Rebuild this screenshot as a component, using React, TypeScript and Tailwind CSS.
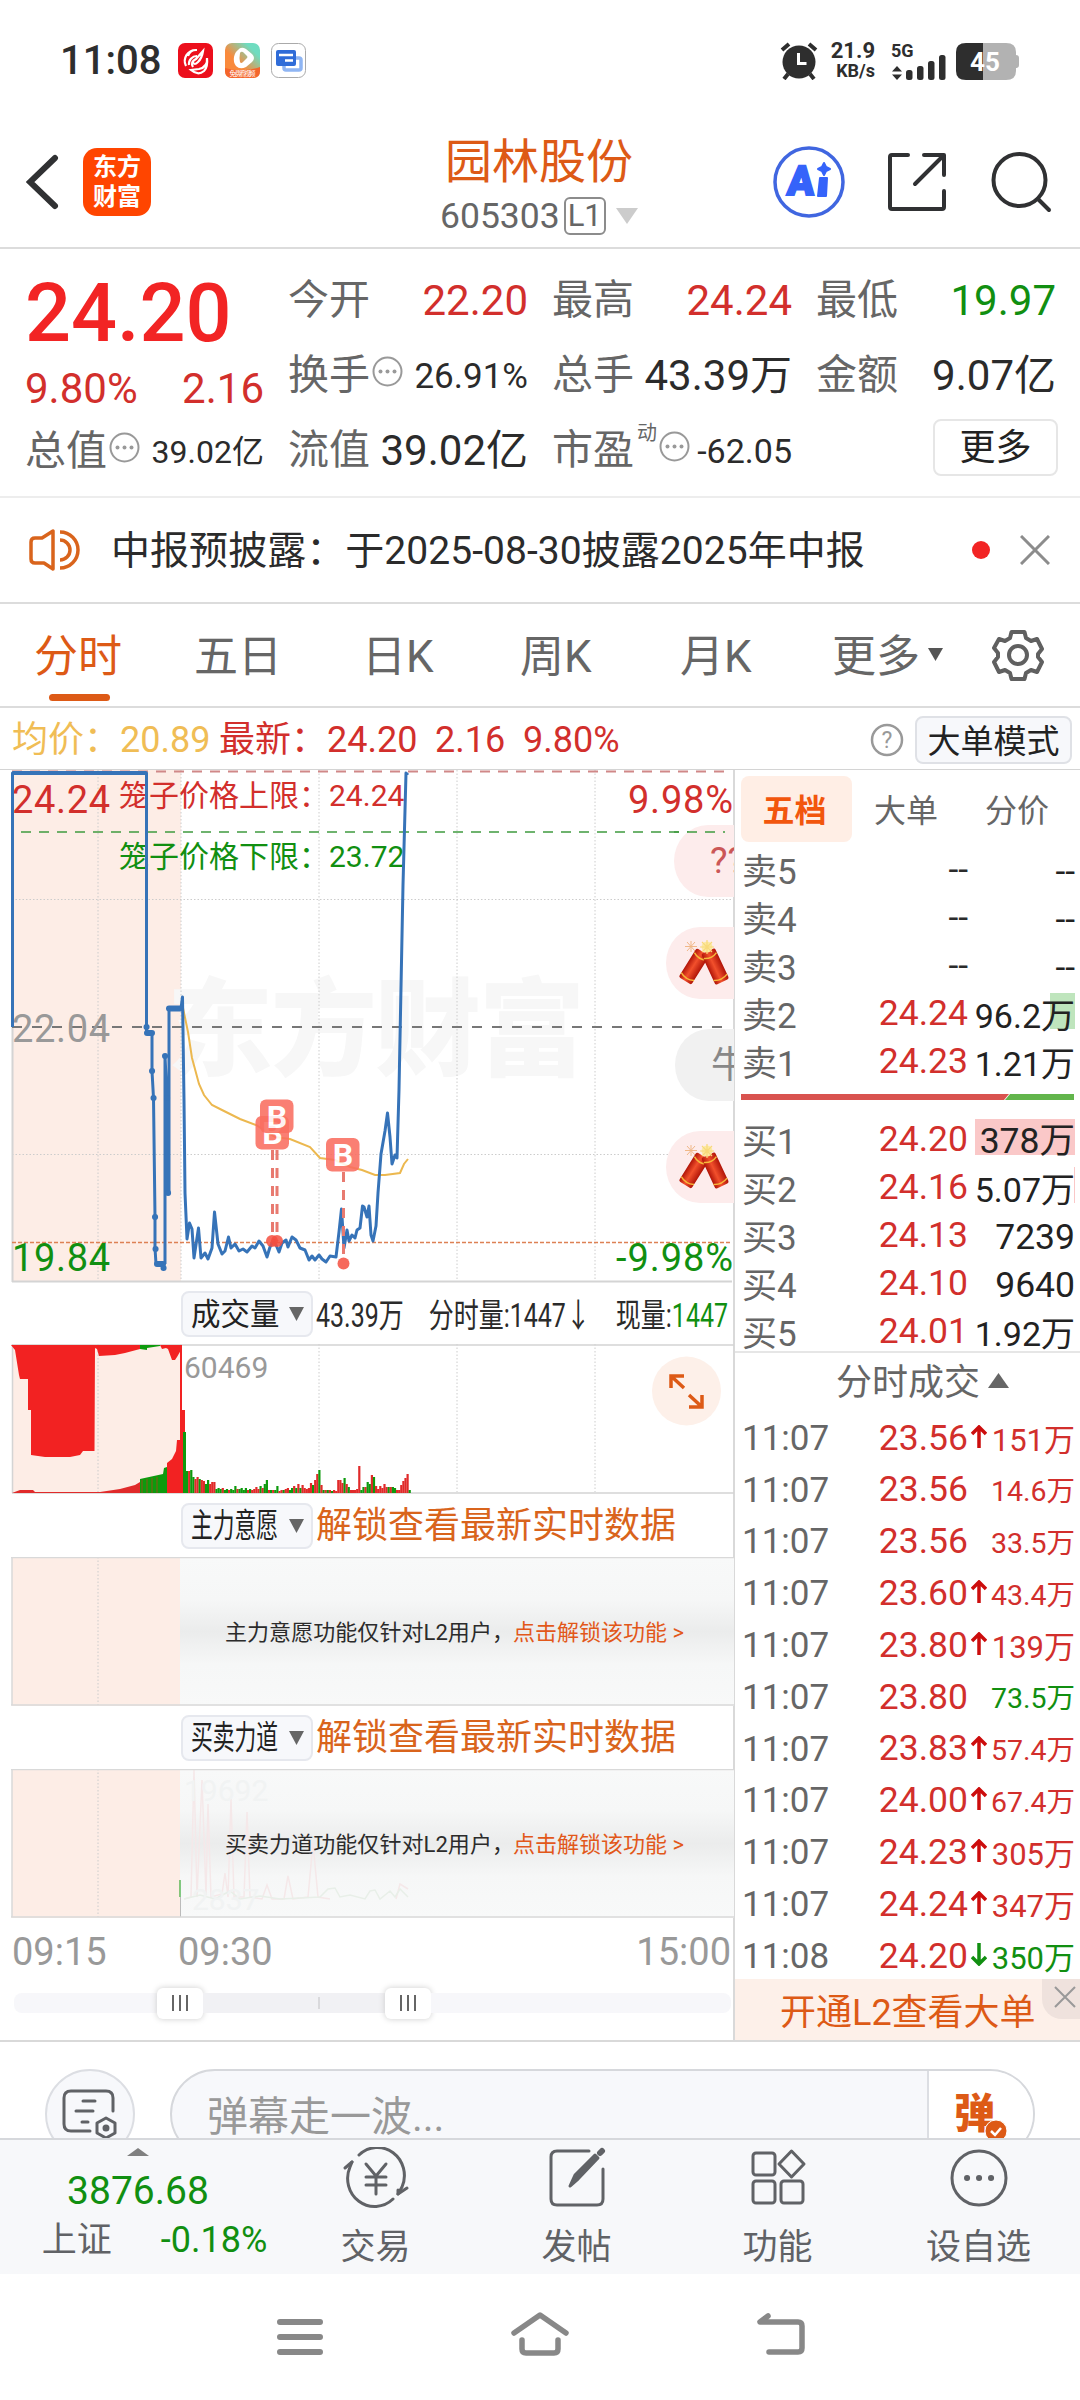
import { clsx } from "clsx";
import type { ReactNode } from "react";

const RED = "#d22f2c";
const GREEN = "#118f11";

interface Quote {
    label: string;
    price: string;
    volume: string;
    mark?: string;
}

interface Trade {
    time: string;
    price: string;
    volume: string;
    arrow?: "up" | "down";
    sell?: boolean;
}

const asks: Quote[] = [
    { label: "卖5", price: "--", volume: "--" },
    { label: "卖4", price: "--", volume: "--" },
    { label: "卖3", price: "--", volume: "--" },
    { label: "卖2", price: "24.24", volume: "96.2万", mark: "w-[25px] bg-[#bfe5bd]" },
    { label: "卖1", price: "24.23", volume: "1.21万" }
];

const bids: Quote[] = [
    { label: "买1", price: "24.20", volume: "378万", mark: "w-[100px] bg-[#fac8c8]" },
    { label: "买2", price: "24.16", volume: "5.07万", mark: "w-px bg-[#fac8c8]" },
    { label: "买3", price: "24.13", volume: "7239" },
    { label: "买4", price: "24.10", volume: "9640" },
    { label: "买5", price: "24.01", volume: "1.92万" }
];

const trades: Trade[] = [
    { time: "11:07", price: "23.56", volume: "151万", arrow: "up" },
    { time: "11:07", price: "23.56", volume: "14.6万" },
    { time: "11:07", price: "23.56", volume: "33.5万" },
    { time: "11:07", price: "23.60", volume: "43.4万", arrow: "up" },
    { time: "11:07", price: "23.80", volume: "139万", arrow: "up" },
    { time: "11:07", price: "23.80", volume: "73.5万", sell: true },
    { time: "11:07", price: "23.83", volume: "57.4万", arrow: "up" },
    { time: "11:07", price: "24.00", volume: "67.4万", arrow: "up" },
    { time: "11:07", price: "24.23", volume: "305万", arrow: "up" },
    { time: "11:07", price: "24.24", volume: "347万", arrow: "up" },
    { time: "11:08", price: "24.20", volume: "350万", arrow: "down", sell: true }
];

// one entry per minute after the open, g = falling, r = rising
const volumeBars =
    "g22 r22 g23 g16 r14 r16 g14 r13 r12 g9 g13 r9 r11 r11 g4 g5 g4 r5 g3 g4 r3 g4 g3 g7 r4 g4 g5 g3 g5 r3 g4 r3 r4 r6 r4 g7 r5 g9 g13 r3 g3 r3 g3 g7 r2 r3 g3 r4 r5 g3 g5 r7 g5 r9 g5 r8 r5 r4 r5 r10 g8 r13 r19 g23 r8 g3 r3 g3 r3 g2 r3 r2 r13 r13 r10 g15 r9 g6 r3 r3 r3 r4 r27 g3 g6 r6 g11 g9 r18 g16 r7 r4 r7 r5 r9 r6 g6 r6 g6 g5 r3 r3 r8 r12 r15 r19 g3"
        .split(" ")
        .map(item => ({
            color: item[0] === "g" ? "#0d9a0d" : "#e02a2a",
            height: Number(item.slice(1))
        }));

function StatusBar() {
    return (
        <div className="flex h-[122px] items-center pl-[60px] pr-[61px] text-[#2e2e2e]">
            <div className="w-[118px] text-[40px] font-medium leading-none">11:08</div>
            <svg width="130" height="36" viewBox="0 0 130 36">
                <defs>
                    <linearGradient id="video" x1="0" y1="1" x2="1" y2="0">
                        <stop offset="0.4" stopColor="#f98a3c" />
                        <stop offset="0.8" stopColor="#6fdcc0" />
                    </linearGradient>
                </defs>
                <rect width="35" height="35" rx="7" fill="#ec0f1c" />
                <path d="M18 7a11 11 0 0 0-10 16M10 13a9 9 0 0 1 9-6M11 22a8 8 0 0 1 8-9M15 24q-3-5 3-8l7-8q-1 7-5 11-4 4-5 0M29 15q1 9-8 11l-8 1q7 6 13 1 4-4 3-13" fill="none" stroke="#fff" strokeWidth="2.2" />
                <rect x="47" width="35" height="35" rx="7" fill="url(#video)" />
                <path d="M47 25q17 5 35-1v4q0 7-7 7h-21q-7 0-7-7z" fill="#f4652b" />
                <path d="M60 7q3-4 8-1l6 5q4 4 0 8l-6 5q-6 3-10-1-3-4-2-9 1-5 4-7zM62 10q-1 5 0 9 1 2 3 0l4-4q1-1 0-2l-4-4q-2-1-3 1" fill="#fff" fillRule="evenodd" />
                <text x="51.500" y="32.500" fontSize="6.500" fill="#fff" textLength="26">免费看视频</text>
                <rect x="93.500" y="0.500" width="34" height="34" rx="7" fill="#fff" stroke="#aaa" />
                <rect x="106" y="15" width="17" height="12" rx="2" fill="none" stroke="#8fb5f3" strokeWidth="3.500" />
                <rect x="98" y="7" width="20" height="16" rx="2" fill="#2f6cd8" />
                <path d="M101 12h14M107 17.500h8" stroke="#fff" strokeWidth="2.500" />
            </svg>
            <div className="ml-auto flex items-center">
                <svg width="38" height="38" viewBox="0 0 38 38" fill="none" stroke="#2e2e2e">
                    <circle cx="19" cy="20" r="16.500" fill="#2e2e2e" stroke="none" />
                    <path d="M2 8l7-6M36 8l-7-6" strokeWidth="4" />
                    <path d="M8 32l-4 5M30 32l4 5" strokeWidth="4" />
                    <path d="M18.500 11v10.500h8" stroke="#fff" strokeWidth="3" />
                </svg>
                <div className="ml-3.5 flex w-[43px] flex-col items-end text-[20px] font-bold leading-[20px]">
                    <span className="text-[22px]">21.9</span>
                    <span className="text-[18px]">KB/s</span>
                </div>
                <svg width="56" height="38" viewBox="0 0 56 38" className="ml-4" fill="#2e2e2e">
                    <text x="0" y="15" fontSize="18" fontWeight="700">5G</text>
                    <path d="M6 24l5 5.500H1zM6 38l5-5.500H1z" />
                    <rect x="15" y="28" width="6.500" height="10" rx="2.500" />
                    <rect x="26" y="24" width="6.500" height="14" rx="2.500" />
                    <rect x="37" y="19" width="6.500" height="19" rx="2.500" />
                    <rect x="48" y="13" width="6.500" height="25" rx="2.500" />
                </svg>
                <svg width="63" height="37" viewBox="0 0 63 37" className="ml-[9px]">
                    <path d="M26 0h24q10 0 10 9v3q3 0 3 3v7q0 3-3 3v3q0 9-10 9H26z" fill="#b2b2b2" />
                    <path d="M27 0H10Q0 0 0 9v19q0 9 10 9h17z" fill="#2e2e2e" />
                    <text x="29" y="28" fontSize="26" fontWeight="700" fill="#fff" textAnchor="middle">45</text>
                </svg>
            </div>
        </div>
    );
}

function Header() {
    return (
        <div className="flex h-[127px] items-center border-b-2 border-[#dcdcdc] pb-1.5 pl-[26px] pr-[28px]">
            <svg width="34" height="60" viewBox="0 0 34 60" fill="none" stroke="#303133" strokeWidth="6" strokeLinecap="round">
                <path d="M29 6L4 30l25 24" />
            </svg>
            <div className="ml-[23px] flex h-[68px] w-[68px] flex-col items-center justify-center rounded-[14px] bg-[#ff4500] text-[24px] font-bold leading-[30px] text-white">
                <span>东方</span>
                <span>财富</span>
            </div>
            <div className="ml-[289px] flex w-[201px] flex-col pt-4">
                <div className="pl-[5px] text-[47px] leading-[52px] text-[#dd5a16]">园林股份</div>
                <div className="flex items-center text-[35.5px] leading-[56px] text-[#666]">
                    605303
                    <span className="ml-1 flex h-[38px] w-[42px] items-center justify-center rounded-md border-2 border-[#8c8c8c] text-[31px] leading-none">L1</span>
                    <svg width="22" height="16" viewBox="0 0 22 16" className="ml-2.5">
                        <path d="M0 0h22L11 16z" fill="#ccc" />
                    </svg>
                </div>
            </div>
            <svg width="74" height="74" viewBox="0 0 74 74" className="ml-auto" fill="#3563fa">
                <circle cx="37" cy="37" r="34" fill="none" stroke="#4066e0" strokeWidth="3.500" />
                <text x="15" y="50" fontSize="41" fontWeight="900" textLength="27" lengthAdjust="spacingAndGlyphs" stroke="#3563fa" strokeWidth="2" transform="skewX(-4) translate(3 0)">A</text>
                <path d="M48 33h7l-1 18h-8zM52 18l2 4 4 2-4 2-2 4-2-4-4-2 4-2z" strokeWidth="2" stroke="#3563fa" strokeLinejoin="round" />
            </svg>
            <svg width="60" height="60" viewBox="0 0 60 60" className="ml-[41px]" fill="none" stroke="#303133" strokeWidth="4" strokeLinecap="round" strokeLinejoin="round">
                <path d="M21 3H5q-2 0-2 2v50q0 2 2 2h50q2 0 2-2V39M37 3h20v20M56 4L28 32" />
            </svg>
            <svg width="62" height="62" viewBox="0 0 62 62" className="ml-[43px]" fill="none" stroke="#303133" strokeWidth="4" strokeLinecap="round">
                <circle cx="29.500" cy="29" r="26" />
                <path d="M48 48l11 11" />
            </svg>
        </div>
    );
}

function Dots() {
    return (
        <svg width="31" height="31" viewBox="0 0 31 31" className="mb-2 ml-0.5 shrink-0" fill="#999">
            <circle cx="15.500" cy="15.500" r="14" fill="none" stroke="#999" strokeWidth="2" />
            <circle cx="8.500" cy="15.500" r="2" />
            <circle cx="15.500" cy="15.500" r="2" />
            <circle cx="22.500" cy="15.500" r="2" />
        </svg>
    );
}

interface StatProps {
    label: string;
    value: string;
    className?: string;
    extra?: ReactNode;
}

function Stat({ label, value, className = "text-[42px] text-[#2b2b2b]", extra }: StatProps) {
    return (
        <div className="flex h-[75px] items-center whitespace-nowrap">
            <span className="text-[41px] text-[#666]">{label}</span>
            {extra}
            <span className={clsx("ml-auto", className)}>{value}</span>
        </div>
    );
}

function Stats() {
    return (
        <div className="flex h-[249px] gap-6 border-b-2 border-[#ededed] pl-[25px] pr-6 pt-3.5 leading-none">
            <div className="w-[239px]">
                <div className="flex h-[101px] items-center text-[81px] font-medium text-[#f22424]">24.20</div>
                <div className="flex h-[50px] items-center justify-between text-[42px] text-[#d22f2c]">
                    <span>9.80%</span>
                    <span>2.16</span>
                </div>
                <Stat label="总值" value="39.02亿" extra={<Dots />} className="text-[32px] text-[#2b2b2b]" />
            </div>
            <div className="w-[240px]">
                <Stat label="今开" value="22.20" className="text-[42px] text-[#d22f2c]" />
                <Stat label="换手" value="26.91%" extra={<Dots />} className="pt-0.5 text-[35px] text-[#2b2b2b]" />
                <Stat label="流值" value="39.02亿" />
            </div>
            <div className="w-[240px]">
                <Stat label="最高" value="24.24" className="text-[42px] text-[#d22f2c]" />
                <Stat label="总手" value="43.39万" />
                <Stat
                    label="市盈"
                    value="-62.05"
                    className="text-[34px] text-[#2b2b2b]"
                    extra={
                        <>
                            <span className="mb-9 ml-[3px] text-[20px] text-[#666]">动</span>
                            <Dots />
                        </>
                    }
                />
            </div>
            <div className="w-[240px]">
                <Stat label="最低" value="19.97" className="text-[42px] text-[#118f11]" />
                <Stat label="金额" value="9.07亿" />
                <div className="ml-auto mr-[-2px] mt-1.5 flex h-[57px] w-[125px] items-center justify-center rounded-lg border-2 border-[#e6e6e6] text-[36px] text-[#222]">更多</div>
            </div>
        </div>
    );
}

function Notice() {
    return (
        <div className="flex h-[106px] items-center border-b-2 border-[#dcdcdc] pl-[29px] pr-[30px]">
            <svg width="52" height="44" viewBox="0 0 52 44" fill="none" stroke="#d9641c" strokeWidth="3.500" strokeLinejoin="round">
                <path d="M24 3v38L15 35H6q-4 0-4-4V14q0-4 4-4h7z" />
                <path d="M31 4a18 18 0 0 1 0 36M31 12a10 10 0 0 1 0 20" />
            </svg>
            <span className="ml-[30px] pt-0.5 text-[39px] leading-none tracking-[0.05px] text-[#2b2b2b]">中报预披露：于2025-08-30披露2025年中报</span>
            <span className="ml-auto h-[18px] w-[18px] rounded-full bg-[#f22424]" />
            <svg width="30" height="30" viewBox="0 0 30 30" className="ml-[30px]" stroke="#8c8c8c" strokeWidth="3">
                <path d="M1 1l28 28M29 1L1 29" />
            </svg>
        </div>
    );
}

function PeriodTabs() {
    return (
        <div className="flex h-[104px] items-center border-b-2 border-[#dcdcdc] pl-[34px] text-[44px] leading-none text-[#666]">
            <div className="relative w-[160px] pt-[3px] text-[#dd5a16]">
                分时
                <span className="absolute left-[15px] top-[62px] h-[7px] w-[61px] rounded-full bg-[#dd5a16]" />
            </div>
            <div className="w-[168px] pt-[3px]">五日</div>
            <div className="w-[158px] pt-[3px]">日K</div>
            <div className="w-[160px] pt-[3px]">周K</div>
            <div className="w-[152px] pt-[3px]">月K</div>
            <div className="flex items-center pt-[3px]">
                更多
                <svg width="15" height="13" viewBox="0 0 15 13" className="mb-1 ml-2" fill="#555">
                    <path d="M0 0h15L7.500 13z" />
                </svg>
            </div>
            <svg width="52" height="52" viewBox="0 0 52 52" className="ml-[49px]" fill="none" stroke="#606060" strokeWidth="4" strokeLinejoin="round">
                <path d="M19.500 3h13l1.500 6 5 3 6-2 5 10-4 5v3l4 5-5 10-6-2-5 3-1.500 6h-13L18 44l-5-3-6 2-5-10 4-5v-4l-4-5L7 10l6 2 5-3z" />
                <circle cx="26" cy="26" r="9" />
            </svg>
        </div>
    );
}

function PriceLine() {
    return (
        <div className="flex h-[62px] items-center border-b border-[#d4d4d4] pl-3 pr-2 pt-0.5 text-[36px] leading-none text-[#d22f2c]">
            <span className="w-[207px] text-[#f0bd55]">均价：20.89</span>
            <span className="w-[216px]">最新：24.20</span>
            <span className="w-[88px]">2.16</span>
            <span>9.80%</span>
            <svg width="34" height="34" viewBox="0 0 34 34" className="ml-auto">
                <circle cx="17" cy="17" r="15" fill="none" stroke="#999" strokeWidth="2.500" />
                <text x="17" y="25" fontSize="23" fill="#999" textAnchor="middle">?</text>
            </svg>
            <span className="ml-[11px] flex h-12 w-[157px] items-center justify-center rounded-lg border-2 border-[#dfe1e6] bg-[#f7f8fb] pt-[3px] text-[33px] text-[#222]">大单模式</span>
        </div>
    );
}

function Firecracker({ x, y }: { x: number; y: number }) {
    const tube = (
        <>
            <rect x="-7.500" y="0" width="15" height="34" rx="2" fill="url(#tube)" />
            <path d="M-7 5q7 4 14 0M-7.500 29q7.500 4 15 0" stroke="#f6b93b" strokeWidth="1.500" fill="none" />
        </>
    );
    return (
        <g transform={`translate(${x} ${y})`}>
            <g transform="translate(21 11) rotate(32)">{tube}</g>
            <g transform="translate(26 10) rotate(-25)">{tube}</g>
            <circle cx="25" cy="6" r="5.500" fill="#fce9a0" />
            <path d="M25-1v14M18 6h14M20 1l10 10M30 1L20 11" stroke="#f8d97a" strokeWidth="1.200" />
            <path d="M9 0v11M3 5.500h12M5 1l8 9M13 1l-8 9" stroke="#f0b888" strokeWidth="1" />
        </g>
    );
}

function BuyMark({ x, y }: { x: number; y: number }) {
    return (
        <g opacity="0.88">
            <rect x={x} y={y} width="33.500" height="33.500" rx="6" fill="#fa6e60" />
            <text x={x + 17} y={y + 28} fontSize="32" fontWeight="700" fill="#fff" textAnchor="middle">B</text>
        </g>
    );
}

function PriceChart() {
    return (
        <svg width="734" height="514" viewBox="0 0 734 514" className="block">
            <defs>
                <linearGradient id="tube">
                    <stop offset="0" stopColor="#b01408" />
                    <stop offset="0.45" stopColor="#f2502c" />
                    <stop offset="1" stopColor="#b01408" />
                </linearGradient>
            </defs>
            <rect x="12" y="0" width="169" height="512" fill="#fdede6" />
            <text x="167" y="297" fontSize="106" fontWeight="900" fill="#f7f7f7" textLength="418">东方财富</text>
            <g stroke="#ccc" strokeDasharray="1.500 2">
                <path d="M98 0v512M181 0v512M319 0v512M457 0v512M595 0v512M12 129.500h720M12 384.500h720" />
            </g>
            <path d="M12.500 250v262M12 511.500h720" stroke="#d4d4d4" strokeWidth="2" fill="none" />
            <path d="M12 257h720" stroke="#777" strokeWidth="2" strokeDasharray="10 10" />
            <path d="M12 1.500h712" stroke="#d08888" strokeWidth="2" strokeDasharray="10 8" />
            <path d="M21 62h704" stroke="#3f9a3f" strokeWidth="1.500" strokeDasharray="10 8" />
            <path d="M12 472.500h720" stroke="#dd8154" strokeWidth="1.500" strokeDasharray="4 2" />

            <g fontSize="38">
                <text x="12" y="43" fill={RED} textLength="98">24.24</text>
                <text x="12" y="272" fill="#999" textLength="98">22.04</text>
                <text x="12" y="501" fill={GREEN} textLength="98">19.84</text>
                <text x="628" y="43" fill={RED} textLength="105">9.98%</text>
                <text x="616" y="501" fill={GREEN} textLength="117">-9.98%</text>
            </g>
            <g fontSize="30">
                <text x="119" y="36" fill={RED}>笼子价格上限：24.24</text>
                <text x="119" y="97" fill={GREEN}>笼子价格下限：23.72</text>
            </g>

            <path
                d="M183 238L188 262 192 288 199 314 204 325 212 335 222 340 240 349 256 355 275 367 290 369 310 377 320 388 335 390 350 397 362 400 375 405 385 405 400 403 404 394 408 389"
                fill="none"
                stroke="#ecb84f"
                strokeWidth="2"
            />
            <path
                d="M12.500 257V3H146.500V263H152V301L153.500 328 155 447V478L156 494H163.500V498 M165 494V286L167 328 168 423V423 M169 423V238.500H181L182.500 227 184 330 185 423 187 469 189.500 453 192 459 194 488 198.500 458 201 488 205 483 208 489 212 478 214.500 442 218 474 222 484 225 481 228.500 467 231 478 235 474 239 481 243 479 247 482 252 476 255 478 259 471 263 476 267 487 270 477 274 470 279 482 282 473 286 470 288 477 292 467 296 470 300 478 305 480 309 490 312 486 315 490 319 485 322 489 326 492 330 486 336 487 339 462 341.500 439 344 478 347 460 349 471 352 465 355 468 357 460 360 458 362.500 436 364 437 367 447 369 436 371 465 373 471 376 456 378 423 381 384 385 361 387.500 343 390 367 392 394 395 385 397 388 399 320 403 115 406 3 408 5"
                fill="none"
                stroke="#3673b8"
                strokeWidth="3"
                strokeLinejoin="round"
            />
            <g fill="none" stroke="#3673b8" strokeWidth="6" strokeLinecap="round">
                <path d="M147 263h5M157 494h6M169 238.500h11" />
                <path d="M146.500 257h.1M152 301h.1M153.500 328h.1M155 447h.1M155.500 479h.1M163.500 498h.1M165 286h.1M167 328h.1M168 423h.1" />
            </g>
            <path d="M12.500 3H146.500" stroke="#3673b8" strokeWidth="4" />

            <g stroke="#e87a70" strokeWidth="3" strokeDasharray="10 8">
                <path d="M272.500 380v91M277 380v91M343.500 402v90" />
            </g>
            <g fill="#f44f3f" fillOpacity="0.85">
                <circle cx="272" cy="471" r="6" />
                <circle cx="277" cy="471" r="6" />
                <circle cx="343.500" cy="493.500" r="6" />
            </g>
            <BuyMark x={255.5} y={346} />
            <BuyMark x={260} y={329.5} />
            <BuyMark x={326} y={368} />

            <g fill="#fdecec">
                <path d="M734 55h-26a34 36 0 0 0 0 72h26zM734 157h-34a34 36 0 0 0 0 72h34zM734 361h-34a34 36 0 0 0 0 72h34z" />
            </g>
            <path d="M734 259h-25a34 36 0 0 0 0 72h25z" fill="#f1f1f1" />
            <path d="M674 62h51" stroke="#3f9a3f" strokeWidth="1.500" strokeDasharray="10 8" strokeDashoffset="5" />
            <text x="710" y="103" fontSize="37" fill="#cb5757">??</text>
            <text x="711" y="308" fontSize="37" fill="#888">牛</text>
            <Firecracker x={682} y={171} />
            <Firecracker x={682} y={375} />
        </svg>
    );
}

function IndicatorSelect({ label, className }: { label: string; className: string }) {
    return (
        <div className="flex h-[46px] w-[132px] items-center rounded-lg border-2 border-[#e6e8ee] bg-[#f7f8fb] pl-2 text-[#222]">
            <div className="w-[90px] overflow-visible whitespace-nowrap">
                <span className={clsx("inline-block origin-left", className)}>{label}</span>
            </div>
            <svg width="15" height="14" viewBox="0 0 15 14" className="ml-2" fill="#666">
                <path d="M0 0h15L7.500 14z" />
            </svg>
        </div>
    );
}

function VolumeChart() {
    return (
        <svg width="734" height="150" viewBox="0 0 734 150" className="block">
            <rect x="12" y="0" width="169" height="148" fill="#fdede6" />
            <path d="M98 0v148M181 0v148M319 0v148M457 0v148M595 0v148" stroke="#ccc" strokeDasharray="1.500 2" />
            <path d="M12 1h722M12.500 0v149M12 149h722" stroke="#d4d4d4" strokeWidth="1.500" />
            <g transform="translate(0 1)">
                <path d="M11 0L15 5 19 30 20 34H28V65H31V110L45 112H70L80 110 83 106H94.500L95 3 97 4 99 11 115 10 125 8 140 4V0z" fill="#f22222" />
                <path d="M140 0v4l7 1V3l13-2V0z" fill="#0d9a0d" />
                <path d="M160 0l2 4 4-1 2 1 4 11 3 0 2-3 4-7V0z" fill="#f22222" />
                <path d="M12 148l8-3h13l2 2h65l20-3 15-4 5-3v11z" fill="#e02a2a" />
                <path d="M140 148v-14l23-5 1-6 3-1v26z" fill="#0d9a0d" />
                <path d="M142 148v-13M147 148v-14M152 148v-15M157 148v-16" stroke="#c43b1a" strokeWidth="0.700" />
                <path d="M167 148v-30l5-4 4-8 1-11h3V0h2v65h3v83z" fill="#f22222" />
                <rect x="183" y="87" width="3" height="61" fill="#0d9a0d" />
                {
                    volumeBars.map((bar, index) => (
                        <rect
                            key={index}
                            x={186 + index * 2.1}
                            y={148 - bar.height}
                            width="2.200"
                            height={bar.height}
                            fill={bar.color}
                        />
                    ))
                }
            </g>
            <text x="184" y="34" fontSize="30" fill="#999">60469</text>
            <circle cx="686.500" cy="47" r="34.500" fill="#fdf0e9" />
            <path d="M684 44L671 32M671 44V32h13M689 51l13 12M702 51v12h-13" fill="none" stroke="#dd5a16" strokeWidth="3.500" />
        </svg>
    );
}

function LockedPanel({ name, peaks }: { name: string; peaks?: boolean }) {
    return (
        <>
            <div className="flex h-[63px] items-center pl-[181px]">
                <IndicatorSelect label={name} className="scale-x-[0.66] text-[33px]" />
                <span className="ml-[3px] pt-px text-[36px] text-[#d9641c]">解锁查看最新实时数据</span>
            </div>
            <svg width="734" height="149" viewBox="0 0 734 149" className="block">
                <defs>
                    <linearGradient id="haze" x1="0" y1="0" x2="0" y2="1">
                        <stop offset="0" stopColor="#f8f9f9" />
                        <stop offset="0.28" stopColor="#f6f7f7" />
                        <stop offset="0.5" stopColor="#ebecec" />
                        <stop offset="0.72" stopColor="#f6f7f7" />
                        <stop offset="1" stopColor="#f8f9f9" />
                    </linearGradient>
                </defs>
                <rect x="12" y="0" width="169" height="149" fill="#fdede6" />
                <path d="M98 0v148" stroke="#ccc" strokeDasharray="1.500 2" />
                <rect x="180" y="0" width="554" height="149" fill="url(#haze)" />
                {
                    peaks && (
                        <>
                            <path d="M184 130L191 128 194 1 197 128 202 11 206 126 208 35 211 128 222 125 225 104 228 128 231 30 234 128 244 128 247 43 250 128 262 130 267 116 272 130 284 130 288 107 293 130 308 128 313 74 318 128 330 130M396 130L400 115 408 120" fill="none" stroke="#f5e8e9" strokeWidth="1.500" />
                            <path d="M184 130L200 126 215 130 230 122 240 130 260 127 280 130 320 128 328 120 335 119 340 128 350 126 365 130 370 122 375 121 380 130 390 122 395 128 400 120 408 128" fill="none" stroke="#e8efe8" strokeWidth="1.500" />
                            <text x="184" y="32" fontSize="30" fill="#f1f3f3">19692</text>
                            <text x="192" y="141" fontSize="30" fill="#f1f3f3">2837</text>
                            <path d="M180.500 148v-20" stroke="#bbb" />
                            <path d="M180 128v-17" stroke="#0d9a0d" />
                        </>
                    )
                }
                <path d="M11 .5h723M12 0v148M11 148h723" stroke="#d9d9d9" strokeWidth="1.500" />
                <g fontSize="22">
                    <text x="225" y="83" fill="#2b2b2b" textLength="289">{name}功能仅针对L2用户，</text>
                    <text x="513" y="83" fill="#e2581a" textLength="171">点击解锁该功能 &gt;</text>
                </g>
            </svg>
        </>
    );
}

function SliderHandle() {
    return (
        <div className="flex h-[31px] w-[46px] items-center justify-center gap-[5px] rounded-md bg-white shadow-[0_0_6px_#ccc]">
            <span className="h-4 w-0.5 bg-[#666]" />
            <span className="h-4 w-0.5 bg-[#666]" />
            <span className="h-4 w-0.5 bg-[#666]" />
        </div>
    );
}

function Charts() {
    return (
        <div className="w-[735px] shrink-0 border-r-2 border-[#d9d9d9] leading-none">
            <PriceChart />
            <div className="flex h-[60px] items-center pl-[181px]">
                <IndicatorSelect label="成交量" className="scale-x-[0.95] text-[31px]" />
                <div className="ml-[3px] w-[415px] whitespace-nowrap pt-0.5">
                    <span className="inline-block origin-left scale-x-[0.757] text-[33px] text-[#2b2b2b]">
                        43.39万　分时量:1447↓　现量:<span className="text-[#118f11]">1447</span>
                    </span>
                </div>
            </div>
            <VolumeChart />
            <LockedPanel name="主力意愿" />
            <LockedPanel name="买卖力道" peaks />
            <div className="flex h-[66px] items-center pl-3 pt-0.5 text-[38px] text-[#999]">
                <span className="w-[166px]">09:15</span>
                <span>09:30</span>
                <span className="ml-auto pr-0.5">15:00</span>
            </div>
            <div className="flex h-[38px] items-center pl-3.5">
                <div className="h-5 w-[143px] rounded-l-lg bg-[#f7f7fa]" />
                <SliderHandle />
                <div className="flex h-5 w-[182px] items-center bg-[#f1f1f4]">
                    <span className="ml-[115px] h-3 w-0.5 bg-[#d9d9dc]" />
                </div>
                <SliderHandle />
                <div className="h-5 w-[300px] rounded-r-lg bg-[#f7f7fa]" />
            </div>
        </div>
    );
}

function QuoteRow({ label, price, volume, mark }: Quote) {
    return (
        <div className="flex h-12 shrink-0 items-center pl-[7px] pr-1.5 text-[35px]">
            <span className="w-[130px] pt-1 text-[#666]">{label}</span>
            <span className={clsx("w-[96px] text-right text-[35.5px]", price === "--" ? "text-[#2b2b2b]" : "text-[#d22f2c]")}>{price}</span>
            <span
                className={clsx(
                    "relative ml-auto flex h-9 w-[101px] items-center justify-end text-[#222]",
                    volume.includes(".") ? "text-[34px]" : "text-[35.5px]"
                )}
            >
                {mark && <span className={clsx("absolute right-0 top-[-3px] h-9", mark)} />}
                <span className="relative pt-[3px]">{volume}</span>
            </span>
        </div>
    );
}

function TradeRow({ time, price, volume, arrow, sell }: Trade) {
    return (
        <div className="flex h-[51.8px] shrink-0 items-center whitespace-nowrap pl-[7px] pr-1.5 pt-[3px] text-[35px]">
            <span className="w-[130px] text-[#666]">{time}</span>
            <span className="w-[96px] text-right text-[35.5px] text-[#d22f2c]">{price}</span>
            <span className="flex w-[22px] shrink-0 justify-center">
                {
                    arrow && (
                        <svg width="16" height="23" viewBox="0 0 16 23" className="mb-1" fill="none" stroke={arrow === "up" ? "#cc0d0d" : GREEN} strokeWidth="3.500">
                            <path d={arrow === "up" ? "M8 23V3M1 9l7-7 7 7" : "M8 0v20M1 14l7 7 7-7"} />
                        </svg>
                    )
                }
            </span>
            <span
                className={clsx(
                    "w-[85px] shrink-0 pt-1 text-right",
                    volume.includes(".") ? "text-[28.5px]" : "text-[31px]",
                    sell ? "text-[#118f11]" : "text-[#d22f2c]"
                )}
            >
                {volume}
            </span>
        </div>
    );
}

function OrderBook() {
    return (
        <div className="flex flex-1 flex-col leading-none">
            <div className="flex h-[76px] items-start pl-1.5 pt-1.5 text-[32px] text-[#666]">
                <span className="flex h-[66px] w-[111px] items-center justify-center rounded-lg bg-[#ffeee5] pr-1 pt-1 font-bold text-[#f2560d]">五档</span>
                <span className="flex h-[66px] w-[108px] items-center justify-center pt-1">大单</span>
                <span className="flex h-[66px] w-[114px] items-center justify-center pt-1">分价</span>
            </div>
            <div className="flex h-[248px] flex-col">
                {asks.map(quote => <QuoteRow key={quote.label} {...quote} />)}
            </div>
            <svg width="333" height="6" viewBox="0 0 333 6" className="ml-1.5 shrink-0">
                <path d="M0 0h268l-5 6H0z" fill="#d9534f" />
                <path d="M269 0h64v6h-69z" fill="#62b54c" />
            </svg>
            <div className="flex h-[253px] flex-col border-b-2 border-[#e6e6e6] pt-4">
                {bids.map(quote => <QuoteRow key={quote.label} {...quote} />)}
            </div>
            <div className="flex h-[58px] items-center pl-[101px] pt-0.5 text-[36px] text-[#666]">
                分时成交
                <svg width="21" height="15" viewBox="0 0 21 15" className="mb-1.5 ml-2" fill="#666">
                    <path d="M0 15h21L10.500 0z" />
                </svg>
            </div>
            <div className="flex h-[568px] flex-col">
                {trades.map((trade, index) => <TradeRow key={index} {...trade} />)}
            </div>
            <div className="relative flex h-[61px] items-center bg-[#fdf0e9] pl-[45px] pt-1.5 text-[36px] text-[#dd5a16]">
                开通L2查看大单
                <span className="absolute right-0 top-0 flex h-10 w-[39px] items-center justify-center rounded-bl-[20px] bg-[#efe2dd]">
                    <svg width="22" height="22" viewBox="0 0 22 22" className="mb-1 ml-1.5" stroke="#999" strokeWidth="2">
                        <path d="M1 1l20 20M21 1L1 21" />
                    </svg>
                </span>
            </div>
        </div>
    );
}

function CommentBar() {
    return (
        <div className="flex h-[98px] items-start gap-[35px] overflow-hidden border-t-2 border-[#d9d9d9] pl-[45px] pt-[27px]">
            <div className="flex h-[90px] w-[90px] shrink-0 items-center justify-center rounded-full border-2 border-[#dcdee3] bg-[#f7f8fb]">
                <svg width="56" height="50" viewBox="0 0 56 50" fill="none" stroke="#606266" strokeWidth="3" strokeLinecap="round" strokeLinejoin="round">
                    <path d="M51 22V9q0-7-7-7H9Q2 2 2 9v26q0 7 7 7h19M21 12h12M14 22h17M20 33h6" />
                    <path d="M44 29l9 5v10l-9 5-9-5V34z" />
                    <circle cx="44" cy="39" r="2" fill="#606266" />
                </svg>
            </div>
            <div className="flex h-[90px] w-[865px] shrink-0 items-center overflow-hidden rounded-full border-2 border-[#d6d8dc] bg-[#f7f8fb] text-[41px] leading-none">
                <span className="w-[755px] pl-[35px] pt-[7px] text-[#999]">弹幕走一波...</span>
                <span className="relative flex h-full flex-1 items-center border-l-2 border-[#dcdee3] bg-white pl-[25px] font-black text-[#dd5a16]">
                    弹
                    <svg width="24" height="24" viewBox="0 0 24 24" className="absolute left-[55px] top-[48px]">
                        <circle cx="12" cy="12" r="11" fill="#dd5a16" stroke="#fff" />
                        <path d="M7 12l4 4 6-7" fill="none" stroke="#fff" strokeWidth="2.500" />
                    </svg>
                </span>
            </div>
        </div>
    );
}

const actions = [
    {
        label: "交易",
        icon: (
            <>
                <path d="M17 8A27 28 0 0 1 60 40L56 47M51 52A27 28 0 0 1 8 20L10 15" />
                <path d="M3 21l7-6M65 41l-9 6v-4" />
                <path d="M24 17l10 12 10-12M34 29v18M24 30h20M24 38h20" />
            </>
        )
    },
    {
        label: "发帖",
        icon: (
            <>
                <path d="M46 4H14q-6 0-6 6v42q0 6 6 6h40q6 0 6-6V22" />
                <path d="M27 39l5-11L52 8l3 3-20 21z" fill="#606266" />
                <path d="M57 6l2-2" strokeWidth="6" />
            </>
        )
    },
    {
        label: "功能",
        icon: (
            <>
                <rect x="9" y="6" width="22" height="22" rx="3" />
                <path d="M47.500 4L60 17 47.500 30 35 17z" />
                <rect x="9" y="34" width="22" height="22" rx="3" />
                <rect x="37" y="34" width="22" height="22" rx="3" />
            </>
        )
    },
    {
        label: "设自选",
        icon: (
            <>
                <circle cx="34" cy="31" r="27" />
                <path d="M22 31h.1M34 31h.1M46 31h.1" strokeWidth="6" />
            </>
        )
    }
];

function BottomBar() {
    return (
        <div className="flex h-[136px] border-t-2 border-[#d6d8dc] bg-[#f7f8fa] leading-none text-[#606266]">
            <div className="flex w-[275px] flex-col items-center pl-px pt-2">
                <svg width="22" height="8" viewBox="0 0 22 8" fill="#808080">
                    <path d="M0 8h22L11 0z" />
                </svg>
                <div className="mt-4 text-[39px] text-[#118f11]">3876.68</div>
                <div className="mt-[11px] flex items-center gap-[49px] pl-[33px]">
                    <span className="text-[35px]">上证</span>
                    <span className="text-[36px] text-[#118f11]">-0.18%</span>
                </div>
            </div>
            {
                actions.map(action => (
                    <div key={action.label} className="flex w-[201px] flex-col items-center pt-[7px]">
                        <svg width="68" height="62" viewBox="0 0 68 62" fill="none" stroke="#606266" strokeWidth="3" strokeLinecap="round" strokeLinejoin="round">
                            {action.icon}
                        </svg>
                        <span className="mt-[21px] whitespace-nowrap text-[35px]">{action.label}</span>
                    </div>
                ))
            }
        </div>
    );
}

function SystemNav() {
    return (
        <div className="flex h-[126px] items-center justify-center gap-[180px]">
            <svg width="60" height="50" viewBox="0 0 60 50" stroke="#888" strokeWidth="6" strokeLinecap="round">
                <path d="M10 10h40M10 25h40M10 40h40" />
            </svg>
            <svg width="60" height="50" viewBox="0 0 60 50" fill="none" stroke="#888" strokeWidth="5.500" strokeLinecap="round" strokeLinejoin="round">
                <path d="M4 21L30 3l26 18M12 28v9q0 4 4 4h28q4 0 4-4v-9" />
            </svg>
            <svg width="60" height="50" viewBox="0 0 60 50" fill="none" stroke="#888" strokeWidth="5.500" strokeLinecap="round" strokeLinejoin="round">
                <path d="M18 4l-8 6h38q4 0 4 4v22q0 4-4 4H19" />
            </svg>
        </div>
    );
}

export default function App() {
    return (
        <div className="h-[2400px] w-[1080px] overflow-hidden bg-white font-[Roboto,'Noto_Sans_CJK_SC',sans-serif]">
            <StatusBar />
            <Header />
            <Stats />
            <Notice />
            <PeriodTabs />
            <PriceLine />
            <div className="flex h-[1270px]">
                <Charts />
                <OrderBook />
            </div>
            <CommentBar />
            <BottomBar />
            <SystemNav />
        </div>
    );
}
